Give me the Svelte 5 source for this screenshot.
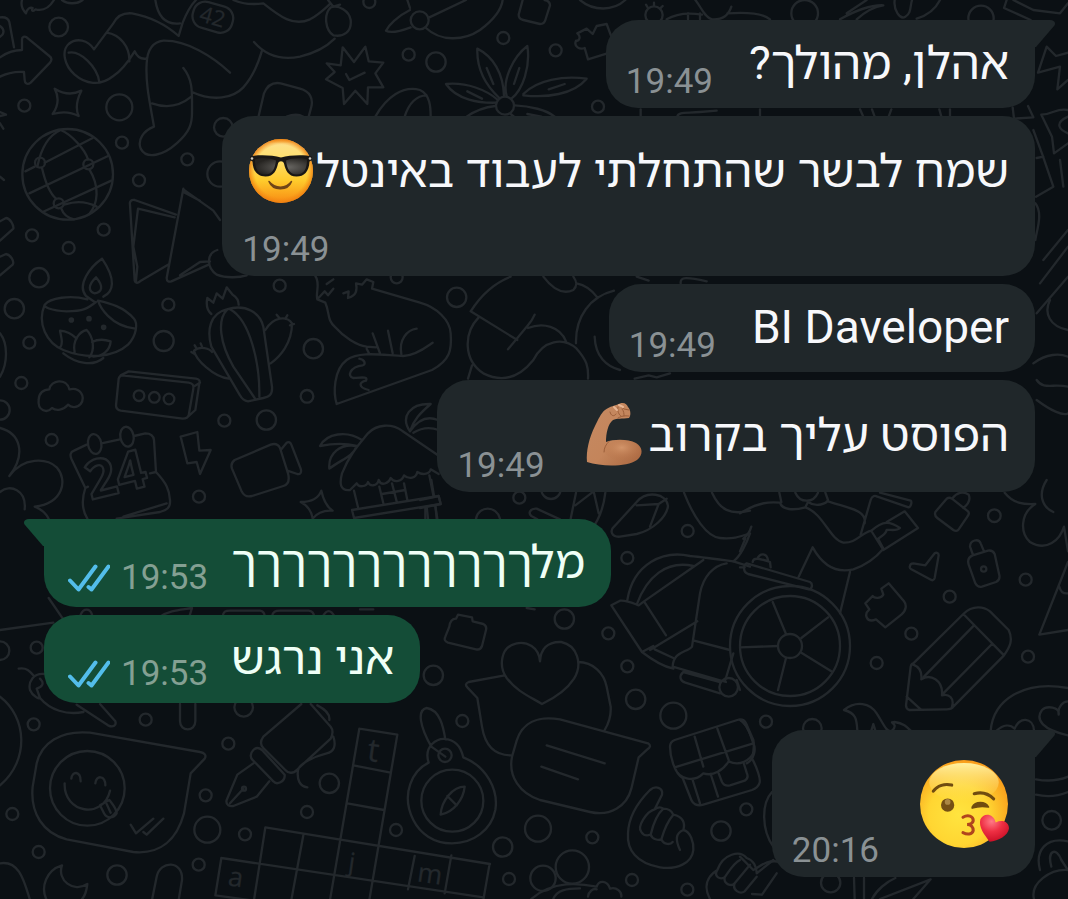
<script>
  const messages = [
    { id: 1, side: 'in', text: 'אהלן, מהולך?', time: '19:49', tail: true },
    { id: 2, side: 'in', text: 'שמח לבשר שהתחלתי לעבוד באינטל', emoji: 'cool', time: '19:49', stacked: true },
    { id: 3, side: 'in', text: 'BI Daveloper', time: '19:49' },
    { id: 4, side: 'in', text: 'הפוסט עליך בקרוב', emoji: 'arm', time: '19:49' },
    { id: 5, side: 'out', text: 'מל' + 'ך'.repeat(12), time: '19:53', tail: true, first: true },
    { id: 6, side: 'out', text: 'אני נרגש', time: '19:53' },
    { id: 7, side: 'in', emoji: 'kiss', time: '20:16', tail: true, first: true }
  ];

  // Wallpaper dots: x, y, radius
  const dots = [
    [176,81,28],[73,317,18],[358,322,39],[366,428,18],[562,478,18],[417,541,18],[311,689,18],[96,706,18],[206,744,18],[117,833,29],[670,382,28],[660,522,38],[839,857,18],[120,488,15],[265,493,15],[176,610,15],
    [1108,6,18],[1226,164,18],[1308,186,29],[1510,114,18],[1667,151,18],[1794,320,18],[1259,61,27],[1515,317,27],[1962,45,26],
    [43,926,29],[88,1028,18],[64,1149,18],[505,914,18],[491,1023,30],[940,1046,29],[921,1189,19],[799,1260,29],[673,1262,18],[155,1320,18],[597,1490,18],[1190,832,18],[417,1187,16],[463,1192,16],[507,1197,16],[0,1230,29],
    [1558,1493,18],[1653,1468,29],[2063,1593,18],[1882,1674,18],[1825,1900,18],[1693,1857,29],[1882,1999,18],[1907,2098,29],[2020,2147,39],[1300,2026,29],[1387,2163,18],[1614,2486,39],[1508,2541,29],[1777,2512,18],[2163,2493,29],[2239,2428,18],[1527,2637,18],[1629,2635,38],[1717,2601,50],[1896,2640,18],[2062,2669,18],[1357,2402,93],[1335,2266,20],
    [2983,1547,19],[3077,1739,18],[2849,1790,18],[2734,1901,18],[2630,1989,18],[3084,1970,18],[2298,2165,18],[2437,2185,28],[2951,1707,8],[2370,1938,180],[2370,1938,150],[2370,1938,36],
    [101,2173,18],[437,2159,18],[110,1943,18],[0,1952,28],[37,2442,18],[617,2386,18],[685,2231,18],[988,2350,29],[921,2436,18],[622,2489,39],[735,2503,18],[596,2594,18],[116,2556,18],[351,2625,29],[1188,2490,18],[731,2122,28],[262,2365,112],
    [2414,40,40],[2943,55,38],[3155,2461,28],[2492,2648,29],[1370,892,29]
  ];
</script>

{#snippet emojiIcon(kind)}
  {#if kind === 'cool'}
    <svg class="emoji" viewBox="0 0 66 66" role="img" aria-label="😎">
      <defs>
        <linearGradient id="coolFace" x1="0" y1="0" x2="0" y2="1">
          <stop offset="0" stop-color="#f6a62c" /><stop offset=".07" stop-color="#fde08a" /><stop offset=".3" stop-color="#ffe06e" /><stop offset=".65" stop-color="#ffcb2c" /><stop offset="1" stop-color="#f88a12" />
        </linearGradient>
        <radialGradient id="coolEdge"><stop offset=".82" stop-color="#f58d16" stop-opacity="0" /><stop offset="1" stop-color="#ee7d10" stop-opacity=".85" /></radialGradient>
        <radialGradient id="lens" cx=".6" cy=".55" r=".6"><stop offset="0" stop-color="#6c6a66" /><stop offset="1" stop-color="#262421" /></radialGradient>
      </defs>
      <circle cx="33" cy="33" r="32" fill="url(#coolFace)" />
      <circle cx="33" cy="33" r="32" fill="url(#coolEdge)" />
      <path d="M2 18.500C10 16.500 24 17 33 19.500 42 17 56 16.500 64 18.500L64 22 61.500 23.500C61 34 56 38.500 48.500 38.500 40 38.500 37.500 32 36 25.500 35 22.500 31 22.500 30 25.500 28.500 32 26 38.500 17.500 38.500 10 38.500 5 34 4.500 23.500L2 22Z" fill="#191715" />
      <path d="M7 21.500C13 19.500 22 20 28 22.500 27 31 24 36.500 17.500 36.500 10 36.500 7 31 7 21.500ZM59 21.500C53 19.500 44 20 38 22.500 39 31 42 36.500 48.500 36.500 56 36.500 59 31 59 21.500Z" fill="url(#lens)" />
      <circle cx="4" cy="20.500" r="1.300" fill="#cfcac2" /><circle cx="62" cy="20.500" r="1.300" fill="#cfcac2" />
      <path d="M21 43.500C27 51 38 51 43.500 43.500 40 53 25 53.500 21 43.500Z" fill="#704517" stroke="#704517" stroke-width="1.500" stroke-linejoin="round" />
    </svg>
  {:else if kind === 'arm'}
    <svg class="emoji" viewBox="-3 0 66 66" role="img" aria-label="💪🏽">
      <defs>
        <linearGradient id="arm" x1="0" y1="0" x2="1" y2="1"><stop offset="0" stop-color="#c58a63" /><stop offset=".55" stop-color="#c4855b" /><stop offset="1" stop-color="#a9663f" /></linearGradient>
        <radialGradient id="bicep" cx=".5" cy=".35" r=".65"><stop offset="0" stop-color="#d3956a" /><stop offset="1" stop-color="#b57045" stop-opacity="0" /></radialGradient>
      </defs>
      <path d="M3 60C2 49 5 36 11 24 14 18 17 11 21 8 26 4 31 4 36 1.500 40 0 43 2 44 5 47 8 47 14 45 16 38 17 33 16 29 18 24 22 22 31 22 40 30 37 44 37 52 41 59 45 59.500 53 53 58 43 65 18 65 3 60Z" fill="url(#arm)" />
      <path d="M23 43C30 37 44 37 51 41 57 45 57 52 51 56 42 62 25 60 20 49Z" fill="url(#bicep)" />
      <path d="M20 50C20 46 22 42 25 39.500M26 10C27 14 30 15 32 12M34 5C33 9 35 13 37 14M38 7C40 9 40 12 40 14M36 4 40 7 45 8M34 16C39 13 43 14 45 14" fill="none" stroke="#9b5e39" stroke-width="1" stroke-linecap="round" />
      <path d="M35 3 39 5M30 5 33 8" stroke="#e8b795" stroke-width="2" stroke-linecap="round" />
    </svg>
  {:else}
    <svg class="emoji large" viewBox="0 0 88 88" role="img" aria-label="😘">
      <defs>
        <radialGradient id="kissFace" cx=".44" cy=".62" r=".62"><stop offset="0" stop-color="#ffe43f" /><stop offset=".55" stop-color="#ffd632" /><stop offset="1" stop-color="#f99d1b" /></radialGradient>
        <linearGradient id="kissShine" x1="0" y1="0" x2="0" y2="1"><stop offset="0" stop-color="#fff1a0" /><stop offset="1" stop-color="#ffdf60" stop-opacity="0" /></linearGradient>
        <radialGradient id="heart" cx=".4" cy=".25" r=".75"><stop offset="0" stop-color="#ff7a86" /><stop offset=".5" stop-color="#ee2f43" /><stop offset="1" stop-color="#cb1027" /></radialGradient>
      </defs>
      <circle cx="44" cy="44" r="43" fill="url(#kissFace)" />
      <ellipse cx="44" cy="23" rx="34" ry="19" fill="url(#kissShine)" />
      <path d="M14 31.500C18 26 25 24 32 25.500M54 34C61 32 68 34 73 39" fill="none" stroke="#704c10" stroke-width="3" stroke-linecap="round" />
      <circle cx="28" cy="45" r="6.500" fill="#755014" /><circle cx="28" cy="42" r="2.800" fill="#ab8745" />
      <path d="M52 47C55 41 65 41 68 47 63 46 58 46 52 48Z" fill="#704c10" stroke="#704c10" stroke-width="1.500" stroke-linejoin="round" />
      <path d="M43 57C48 54 53 56 53 60 53 63 49 64 47 64 51 64 53 67 53 70 52 74 47 74 43 72" fill="none" stroke="#b0451d" stroke-width="3" stroke-linecap="round" />
      <path d="M69 81C64 74 58 67 60 59 63 52 73 53 75 62 81 59 88 61 88 68 87 75 78 80 69 81Z" fill="url(#heart)" />
    </svg>
  {/if}
{/snippet}

<div class="chat">
  <svg class="wallpaper" viewBox="0 0 3204 2697" preserveAspectRatio="xMidYMin slice" aria-hidden="true">
    {#each dots as [cx, cy, r]}
      <circle {cx} {cy} {r} />
    {/each}

    <!-- upper left: stocking figure, arrow, globe, cards -->
    <path d="M66 0C62 15 66 28 78 40 80 28 90 20 98 24 92 32 100 36 106 28 135 35 150 20 162 0M186 0C200 12 230 14 248 0M0 52C18 50 26 58 28 66L42 142M0 172C20 158 44 150 66 150L66 118C66 110 74 108 80 112L148 168C156 174 156 180 150 188L92 248C82 256 74 250 74 240L72 216C44 214 20 220 0 230M0 78C14 88 14 102 0 110" />
    <path d="M282 148 340 70C352 46 372 38 396 40 450 50 500 76 536 108L548 68C560 38 572 16 588 0M466 0C472 40 490 76 540 70M282 148C264 120 230 112 206 132 184 152 192 196 224 224 256 252 300 260 340 228 370 208 388 180 404 154 410 168 422 178 438 176M206 158C240 150 292 200 298 246M320 98C360 104 390 140 388 184M690 218C640 170 560 120 490 122 456 126 442 150 440 190 436 250 450 310 462 380 430 392 412 420 422 446 440 480 490 466 530 430 570 396 576 370 576 340 576 280 580 240 550 204M576 276C640 306 700 294 730 262 754 236 772 200 786 152M762 126C800 170 850 180 900 170 950 158 980 140 1004 116M456 310C500 326 540 318 574 290M700 0C730 14 760 14 790 10 840 50 880 80 930 58 955 45 975 25 990 12M992 22C970 44 976 90 1000 106 1030 112 1056 96 1052 60 1048 32 1016 14 992 22ZM984 0 1000 20 1020 14" />
    <rect x="578" y="12" width="122" height="80" rx="36" transform="rotate(16 640 50)" />
    <text class="bold" x="600" y="74" font-size="66" transform="rotate(16 640 50)">42</text>
    <path d="M164 266C190 282 220 284 244 272 230 300 226 326 236 348 210 334 186 334 158 342 176 316 178 292 164 266ZM0 336 18 344 0 348M0 370 10 386M0 530 12 540M776 348 792 280C802 256 820 246 842 250L900 266C930 274 940 296 934 320L926 350M860 350C880 342 896 342 910 350" />
    <circle cx="203" cy="523" r="136" />
    <path d="M112 500C124 440 150 404 182 390C216 404 256 450 264 478M134 488 278 414M76 514 104 500M88 580 324 468M128 636 334 542M126 504C136 548 150 580 168 596M192 614C220 606 250 600 290 620M184 626C190 644 204 654 222 658M268 508C300 560 294 610 268 642" />
    <path d="M528 644 404 600C394 598 388 604 390 614L404 842C406 850 414 850 420 844L504 794M524 652 414 626 400 740 412 800 408 842M550 566 500 834C500 844 506 846 514 844L626 794M550 568 640 632 660 660M550 576 600 602M540 826 600 786 630 784M652 750C620 760 618 800 650 824 680 836 720 832 740 826" />
    <path d="M0 664 18 654C30 654 42 676 40 686L0 722M0 770 18 762C32 764 44 784 38 794L0 826" />

    <!-- burst, flower, planet -->
    <path d="M980 190 1022 196 1028 142 1062 186 1096 140 1106 184 1150 188 1126 220 1150 262 1104 262 1102 312 1066 272 1032 312 1028 264 978 238 1004 216ZM1038 222 1048 240 1094 218" />
    <path d="M1230 24 1222 0M1230 30C1190 50 1166 76 1158 92 1170 100 1200 94 1232 82M1288 52 1398 0M1278 84C1320 124 1390 124 1440 90 1480 60 1504 30 1508 0M1568 0 1556 44C1556 54 1562 58 1570 60L1620 72C1630 72 1634 68 1636 60L1650 16C1650 8 1644 2 1634 0M1740 0C1780 34 1840 34 1876 0" />
    <path d="M1498 294C1450 250 1430 200 1432 146 1480 170 1510 220 1512 288M1520 288C1506 240 1540 170 1582 138 1592 200 1568 270 1534 296M1490 308C1440 310 1370 300 1338 252 1400 246 1460 270 1494 300M1570 282C1610 240 1690 226 1760 236 1720 284 1640 294 1570 286M1486 318C1450 322 1420 336 1400 350M1544 316C1590 318 1640 330 1664 350M1532 342 1542 350M1460 204 1480 252M1558 204 1542 252M1402 274 1446 296M1646 268 1694 252M1582 342 1624 350M1126 350C1160 290 1210 256 1260 270 1290 284 1292 320 1292 350M1214 350C1226 310 1250 286 1280 286" />
    <path d="M1732 100 1760 86 1778 102 1790 78 1820 72 1834 110M1732 100C1744 110 1738 124 1728 122 1720 140 1740 150 1754 144L1764 178 1822 160M1944 24 1938 14M1962 18 1962 8M1980 26 1988 18M2000 58C2030 40 2070 38 2106 44M2064 40V58M2100 40V58M2086 0C2104 22 2112 50 2136 58 2170 60 2186 46 2194 20M2182 40C2240 36 2290 40 2310 58M2520 58C2570 30 2610 14 2650 16 2620 20 2590 40 2570 58M2540 40 2600 0M2684 0C2680 30 2700 60 2716 50 2734 40 2730 20 2736 0M2750 56C2790 44 2810 20 2820 0M3020 0 3012 24 3092 60M3040 0 3100 30 3180 40 3204 10" />
    <path d="M1922 328V350M2032 350C2034 334 2060 340 2100 336L2150 332M2280 328V350M2580 328 2590 350M2616 328 2624 350M2674 328 2666 350M2818 328 2824 350M2850 328V350M3038 322 3042 356 3100 352 3084 318M3114 218 3140 140 3168 168 3204 158M3114 218 3180 200 3172 268 3204 240M3124 344C3170 340 3164 324 3204 330M3124 344 3156 410 3162 460 3204 430M3100 390 3128 466 3160 560 3108 590M3130 470 3110 474M3204 350C3160 370 3180 390 3204 400M3190 560 3180 480" />
    <path d="M3106 610C3130 640 3110 690 3106 720M3204 690 3130 780M3204 740 3120 850M3110 940 3204 830M3204 990C3150 980 3130 940 3150 900M3100 1090C3140 1060 3180 1060 3204 1070M3110 1200C3150 1230 3190 1250 3204 1240M3204 1160C3160 1150 3130 1170 3110 1140" />

    <g transform="translate(0 810)">
      <!-- lamp, cloud, router -->
      <path d="M306-34C350 30 340 66 310 80M306-34C270-10 230 46 258 78L284 96M288 22C262 46 266 66 284 70 306 66 312 50 288 22ZM288 96C262 116 250 124 200 124 150 122 130 110 134 104 150 84 210 74 262 88M134 104C110 160 140 220 190 240 260 268 340 264 384 224 410 196 414 160 402 146 370 110 330 100 294 92M294 92C300 110 330 168 406 176M190 250C230 282 280 290 310 264M180 234C190 220 184 204 180 182 204 184 220 196 230 206M224 248C216 210 240 184 260 180 280 200 286 240 268 262M276 216C300 204 320 210 332 214 330 240 310 258 280 260" />
      <circle class="solid" cx="214" cy="150" r="5" /><circle class="solid" cx="267" cy="146" r="5" /><circle class="solid" cx="311" cy="172" r="5" />
      <path d="M148 358C152 330 200 322 208 358 240 350 258 380 242 402 230 416 212 412 204 404 190 420 170 424 156 414 140 432 112 420 116 390 116 370 130 358 148 358ZM366 316 566 338C578 340 582 346 580 356L566 436C564 444 558 446 548 446L362 422C352 420 348 414 348 406L356 326C358 320 360 316 366 316ZM362 316 386 304 588 326C600 328 600 334 598 340L586 420 564 440M580 350 600 338" />
      <!-- cactus -->
      <path d="M634 132C622 122 618 104 622 84L640 98 650 70 668 86 680 52 698 74C714 84 716 94 716 104M744 394C730 392 724 384 720 376L634 230C620 180 630 130 680 118 740 100 780 130 790 170L816 350C818 376 806 380 790 384ZM682 118C650 150 660 220 700 290L764 384M690 118C750 150 780 280 778 380M796 180C820 140 860 136 876 160 876 220 840 260 812 280M686 326C640 320 588 270 582 242 600 226 630 236 636 246M574 246 584 252M584 226 590 236M602 220 606 230M830 134 838 144M862 136 856 146M882 162 870 166" />
      <!-- fox -->
      <path d="M946 18C962 40 946 70 952 88L976 98C990 130 980 150 1006 172 1030 200 1070 226 1100 230L1128 232M952 88 974 64 984 76 1000 56M980 42 1000 28M1030 70 1046 64 1044 84C1070 76 1072 60 1068 40L1086 44 1100 28 1120 36 1116 56M1116 56 1260 98C1310 112 1350 150 1352 190 1356 240 1350 270 1296 300L1010 402C1000 370 1000 300 1040 270 1080 242 1150 256 1210 258 1250 256 1280 230 1298 218M1078 266C1096 270 1098 284 1088 286 1050 290 1040 320 1060 324 1090 322 1104 320 1098 332 1080 336 1070 350 1106 360M1118 190 1140 250M1164 182 1178 250M1204 252C1196 210 1220 180 1250 176M1100 236 1108 252" />
      <!-- calendar, bolt, camera, beach hut -->
      <path d="M260 524 222 542C210 546 210 556 214 566L256 654 264 650M450 610 468 606 462 510C460 494 450 490 436 490L402 498M304 520 360 508M256 654C244 690 246 720 262 746M468 606C500 640 508 660 510 690 512 714 500 720 480 726L350 746M500 700 370 740" />
      <ellipse cx="284" cy="522" rx="20" ry="30" transform="rotate(-10 284 522)" /><ellipse cx="381" cy="500" rx="20" ry="30" transform="rotate(-10 381 500)" />
      <text class="outline" x="272" y="690" font-size="160" transform="rotate(-14 272 690)">24</text>
      <path d="M542 500 592 486 598 542 632 540 600 612 590 576 562 580ZM704 570 812 524C830 518 836 526 840 534L864 610C870 634 864 644 850 648L756 678C734 684 728 670 724 662L696 596C692 584 696 576 704 570ZM842 540 860 518C866 514 872 518 874 524L902 596C906 608 900 614 892 612L862 602" />
      <path d="M1050 660C1020 664 1018 640 1026 610 1050 550 1080 520 1104 490 1130 462 1176 460 1206 482L1314 556M1050 660 1070 640C1076 654 1100 650 1104 636 1108 650 1132 650 1136 630 1144 650 1166 640 1172 624 1184 640 1206 634 1212 616 1228 630 1248 624 1252 606 1270 618 1290 610 1292 598L1316 612M1062 662 1074 712M1138 650 1150 700M1212 640 1222 690M1288 616 1300 676M1056 720 1316 678 1322 702 1062 744ZM1176 640 1190 694M1146 672 1216 660M1086 510C1040 480 980 490 960 528 1000 520 1040 520 1070 528M1070 528C1020 520 984 550 988 596 1020 570 1060 560 1070 528M1230 484C1200 440 1230 400 1292 402 1260 430 1240 450 1230 484 1260 440 1290 440 1314 450M1240 488C1270 470 1300 474 1316 480M1280 710 1284 746M1306 706 1310 746M902 696C926 696 954 690 964 662 970 690 980 710 998 722 970 720 950 730 938 746 934 720 922 706 902 696Z" />
      <path d="M0 474C60 490 80 550 28 618 70 560 140 564 170 592 204 630 190 700 104 710 130 720 140 734 146 746M0 666C30 640 80 660 74 718M0 190C24 220 24 280 0 320" />
    </g>

    <g transform="translate(1290 810)">
      <path d="M340 20C370 60 400 74 430 60 444 46 440 34 430 20M242 20C190 40 150 80 122 124L262 210M146 142C100 190 100 270 160 310 220 340 270 320 310 270 340 210 400 200 440 236 470 270 476 290 474 326M126 286 114 326M234 238 292 168C304 154 310 144 314 134M294 174C340 156 390 170 408 214M440 40C470 46 490 66 502 82M552 62C480 80 436 140 438 220M494 200C496 260 530 290 570 300M620 20 656 32M752 40C750 20 770 20 830 34M614 326 656 316 680 322 720 310" />
    </g>

    <g transform="translate(1260 1440)">
      <path d="M34 0 42 48M0 60 56 48 62 72 0 84M16 84V116M46 78 52 116M168 116C176 76 230 76 240 116M420 118 350 86C330 84 324 100 334 108L352 118M468 38 452 116M466 76 516 38M522 38 536 100M556 38C550 90 530 130 510 154M600 170C572 172 570 150 582 140L650 66C680 30 740 40 744 78 740 110 700 150 650 162ZM650 76 716 72 690 140M716 72 740 56M792 38C820 110 860 170 900 174 940 178 960 170 990 160M876 38C900 90 930 106 990 92M990 160C980 190 960 230 940 244" />
      <path d="M622 360C640 250 730 210 810 228 850 232 880 236 940 244L990 260M650 374C680 290 740 240 820 258M672 364 850 240M574 376 666 516 700 498M574 376 600 362C620 360 640 370 656 376L672 364 738 466M690 510 832 424M666 516C710 550 740 562 760 566M816 500C800 518 760 514 758 560L918 606M816 500 840 340C850 290 880 256 920 250M822 482 930 510M790 576C776 588 780 604 796 608L900 640M790 576 900 606M704 508 760 534M940 520 916 600" />
      <circle cx="926" cy="622" r="28" /><path d="M950 600 960 630" />
      <!-- folder, heart bubble, text bubble -->
      <path d="M88 440C90 424 96 416 108 416L114 404 156 412 158 424 190 432C198 436 200 442 198 450L186 498C182 508 176 510 168 508L84 488C74 484 72 478 76 470ZM526 278 540 276M320 384 344 388" />
      <path d="M360 544C356 500 320 484 290 490 240 500 236 560 260 594 290 634 330 650 366 672 400 656 440 630 462 596 490 550 470 496 424 486 380 484 362 510 360 544ZM474 546C520 546 552 580 560 620L572 680C574 710 566 730 554 750M254 586 146 606C136 610 136 616 142 622L172 654 186 740C194 790 220 826 272 826M420 718 684 790C694 796 690 804 682 808L656 832 634 926C620 980 570 1010 510 996L360 960C300 940 264 890 276 830L290 782C306 730 350 706 420 718ZM380 796 554 850M364 860 474 898" />
      <!-- compass -->
      <path d="M26 848C10 800 50 770 84 778 116 786 124 810 130 832 200 860 236 930 226 990 214 1050 160 1090 96 1090 40 1090 0 1060-20 1020-60 940-20 870 26 848ZM34 800C0 740-10 690 20 684 60 690 70 740 76 778M34 800 76 830M134 920C100 920 64 960 62 1004 100 996 130 960 134 920ZM82 948 110 976" />
      <!-- chest, hands -->
      <path d="M764 780 952 720C966 716 974 722 978 730L1000 780C1004 800 1000 820 996 836 1010 860 1024 900 1018 910 1014 922 1006 926 996 930L850 974C830 980 818 970 814 960L788 894C764 880 750 830 750 800 750 790 754 784 764 780ZM764 862 1000 790M824 770 850 860M892 746 926 840M764 862C776 896 820 910 850 880 880 890 910 870 926 844 960 860 990 840 1000 820M818 900 840 970M872 882 894 950M896 880 906 906C912 918 920 918 930 916L974 902C984 896 984 886 980 878L972 852" />
      <path d="M704 988C680 994 650 1040 664 1056 672 1070 686 1066 692 1064 700 1030 714 1000 730 986 722 980 712 982 704 988M692 1064C696 1078 716 1082 724 1078 732 1050 746 1020 760 1004 754 990 742 986 730 986M724 1078C732 1096 752 1094 758 1086M760 1004C790 1010 796 1030 790 1050M790 1050C766 1060 766 1080 780 1110M790 1050C812 1054 822 1090 820 1110 816 1150 770 1170 720 1162 650 1150 620 1110 624 1060 626 1000 670 950 690 930 706 916 730 922 726 944L704 988" />
      <path d="M892 1170C880 1190 900 1200 914 1192 930 1170 940 1150 960 1140M914 1192C910 1214 936 1220 944 1210L990 1154M944 1210C936 1230 960 1244 974 1234L1010 1190M892 1170C910 1120 960 1110 980 1134 1000 1140 1010 1160 1010 1180L1060 1140M870 1257C850 1220 860 1190 892 1170M334 1257C400 1200 480 1210 530 1220 536 1200 562 1200 570 1226 590 1220 606 1236 604 1250M504 1250C506 1234 520 1224 530 1228M400 1257C410 1230 440 1225 480 1225" />
    </g>

    <g transform="translate(2220 1440)">
      <path d="M0 100C60 64 90 66 120 68 126 90 160 92 196 82 250 100 270 180 310 188 350 190 360 160 394 152 430 120 450 124 480 144 470 154 450 148 440 150 438 160 424 170 414 176L430 206M118 38 124 66M166 38C180 70 220 70 234 38M196 82 204 66C230 84 260 70 264 60L256 38M264 64C330 86 380 90 374 130M396 156 430 210 534 144 494 94 440 126M362 164 392 60C396 46 406 46 412 50L506 82C514 80 516 64 512 62L420 38M176 290 218 202C250 260 290 280 340 268 380 254 410 230 430 206M330 276 300 400M10 176C20 168 30 154 34 140M0 214 16 176M0 262 14 262M20 250 210 306C220 312 216 328 206 328L24 282C8 276 10 256 20 250ZM38 246C40 230 60 236 90 246L92 262M52 236C60 218 80 218 84 240M98 366 138 462M264 412 184 474M0 502 114 498M274 574 184 518M114 630 138 534" />
      <!-- tag, cursor, lock, puzzle, pencil -->
      <path d="M586 96 620 56C626 52 630 52 636 56L684 94C690 100 686 104 682 110L656 148C652 154 646 154 640 150L592 114C584 108 584 102 586 96ZM636 56C650 38 670 32 686 44 694 62 680 76 670 84M510 258C510 252 514 250 520 250L556 256 584 220C590 216 596 220 596 226L584 294C582 302 576 302 570 298L514 268C508 264 508 262 510 258ZM698 226 744 212C754 210 760 214 764 222L778 286C780 296 776 302 768 306L726 320C716 322 710 318 706 310L686 254C682 240 688 230 698 226ZM698 222 690 200C690 180 716 174 722 190L732 214M446 310 424 326 430 344C420 360 400 352 398 348L376 370 388 388C370 404 380 430 408 418L436 442 484 404C500 390 500 374 492 364ZM520 550 670 402C700 372 734 382 750 394L806 450C820 480 810 500 792 526L640 680C636 686 630 688 620 688L508 690C500 688 498 684 498 676L512 560C514 552 518 550 520 550ZM670 402 792 526M552 590 702 436M610 640 756 492M520 554C540 562 546 580 544 598 570 580 610 600 606 646 626 640 644 654 636 680M500 650 542 688" />
      <path d="M794 38C820 70 850 74 886 72 840 100 840 160 870 186 920 216 960 180 972 140L984 214M920 0C894 40 904 80 940 96M984 246 898 464 984 450M958 320C962 336 970 342 984 340M752 752C760 660 850 600 984 624M770 752C790 734 810 732 824 746 836 710 880 710 882 752M956 704C960 680 920 676 906 690 884 720 910 750 984 766M956 704C952 680 970 664 984 664M312 690C350 660 390 670 410 700 430 730 440 760 456 752 480 730 440 726 464 726 490 730 500 740 512 752M312 690C350 700 350 720 352 752M394 752 400 732 406 752M0 720C20 730 30 760 38 780" />
    </g>

    <g transform="translate(0 1800)">
      <path d="M146-6 190 58M0 90 160 68M242 44C250 24 270 24 276 44M480 50C510 30 540 30 576 24L568 50M668 50C670 34 676 32 690 32H780C790 34 794 40 794 50M816 50C818 34 826 32 840 32H926C938 34 942 40 942 50M968 50C980 28 992 28 1004 50M1080 28H1120" />
      <path d="M56 206C80 202 90 214 100 226M134 222C100 218 84 246 90 270 98 290 120 298 120 294L110 266C128 260 134 250 120 236M120 294C150 330 200 346 250 336M230 314 324 376C340 384 350 376 346 364L300 312M540 312V364C540 396 586 396 586 364V312M0 290C80 350 90 480 0 556" />
      <path d="M270 398 600 456C614 458 620 466 614 476L572 520 552 640C530 720 480 764 400 756L200 718C130 700 90 640 98 560L110 490C124 430 180 390 270 398ZM214 536C216 512 242 512 242 544M286 550C288 524 316 526 316 556M194 550C190 640 310 660 330 572M300 616 328 600C340 616 350 626 350 640 340 656 320 656 312 640ZM320 612 332 638M392 674 408 700 460 656M430 696 440 704 490 656" />
      <path d="M904 312 790 410C780 424 782 436 790 444L856 510C864 520 880 522 890 510L992 416C1000 400 1000 390 992 380L932 312M952 316C980 330 990 345 988 360M1000 410C1010 440 1000 456 980 460 940 470 900 490 894 510 890 540 900 560 922 562M760 450C750 460 750 474 758 480L820 544C830 556 856 546 854 524L786 450C776 442 766 444 760 450ZM760 490 712 524 680 600C676 616 690 620 700 618L770 590 808 544M690 610 730 566" /><circle cx="732" cy="566" r="6" />
      <!-- crossword -->
      <path d="M1078 386 1192 404 1108 900M1078 386 990 900M1060 496 1172 518M1042 610 1152 630M796 682 1470 792M796 682 762 900M910 706 874 900M664 774 1450 892M664 774 646 886 762 902M1244 768 1224 868M1354 766 1334 880M1468 796 1450 900" />
      <text class="bold" x="1102" y="484" font-size="96" transform="rotate(8 1120 460)">t</text>
      <text class="bold" x="1044" y="814" font-size="76" transform="rotate(8 1060 800)">j</text>
      <text class="bold" x="684" y="858" font-size="80" transform="rotate(8 700 840)">a</text>
      <text class="bold" x="1252" y="848" font-size="80" transform="rotate(8 1280 830)">m</text>
      <path d="M186 796C140 810 120 860 140 900M186 796C170 840 220 880 262 852 260 870 254 890 244 900M456 900 470 830C480 780 550 780 546 840L536 900M0 790C60 780 74 850 90 900" />
    </g>

    <g transform="translate(2220 2100)">
      <path d="M0 60C20 70 30 100 40 130 50 150 40 180 20 190M96 276C64 310 64 390 100 440M0 470 40 510C60 500 80 476 122 486M66 584 110 520M36 582 66 584M888 238C930 246 960 240 984 230M888 284C930 294 960 286 984 276M342 534 344 597M372 534V597M396 597C410 570 440 545 466 534M420 597 572 538 520 597M900 510C884 450 920 410 984 424M934 500C920 450 950 440 964 480L984 510M984 510C930 506 870 550 882 597" />
    </g>
  </svg>

  <main class="messages">
    {#each messages as m (m.id)}
      <article class="bubble {m.side}" class:stacked={m.stacked} class:tailed={m.tail} class:first={m.first}>
        {#if m.tail}
          <svg class="tail" viewBox="0 0 20 28" aria-hidden="true"><path d="M0 0H15C19 0 21.500 3 19 6L1 27H0Z" /></svg>
        {/if}
        {#if m.text}
          <p class="text" class:tall={m.emoji} dir="rtl">{m.text}{#if m.emoji}{@render emojiIcon(m.emoji)}{/if}</p>
        {:else}
          <p class="sticker">{@render emojiIcon(m.emoji)}</p>
        {/if}
        <footer class="meta">
          {#if m.side === 'out'}
            <svg class="ticks" viewBox="0 0 42 28" role="img" aria-label="Read"><path d="M2 16.500 10.500 25.500 27.500 2.500M20.500 23 23.500 25.500 40.500 2.500" /></svg>
          {/if}
          <time>{m.time}</time>
        </footer>
      </article>
    {/each}
  </main>
</div>

<style>
  :global(body) {
    margin: 0;
    background: #0b1014;
  }

  .chat {
    position: relative;
    min-height: 100vh;
    overflow: hidden;
    background: #0b1014;
    font-family: Roboto, 'Noto Sans Hebrew', 'Open Sans', 'Noto Sans', sans-serif;
  }

  .wallpaper {
    position: absolute;
    inset: 0;
    width: 100%;
    height: 100%;
    fill: none;
    stroke: #23282c;
    stroke-width: 7;
    stroke-linecap: round;
    stroke-linejoin: round;
  }

  .wallpaper .solid {
    fill: #23282c;
  }

  .wallpaper text {
    font-family: 'Open Sans', sans-serif;
  }

  .wallpaper .bold {
    fill: #23282c;
    stroke-width: 1;
  }

  .wallpaper .outline {
    font-weight: 700;
  }

  .messages {
    position: relative;
    display: flex;
    flex-direction: column;
    gap: 8px;
    padding: 20px 33px 20px 44px;
  }

  .bubble {
    position: relative;
    display: flex;
    flex-direction: row-reverse;
    align-items: flex-end;
    border-radius: 32px;
  }

  .in {
    align-self: flex-end;
    gap: 36px;
    padding: 13px 26px 6px 20px;
    background: #20272a;
    color: #f7f8fb;
  }

  .out {
    align-self: flex-start;
    gap: 23px;
    padding: 13px 26px 9px 24px;
    background: #144d37;
    color: #effff6;
  }

  .first {
    margin-top: 19px;
  }

  .in.tailed {
    border-top-right-radius: 0;
  }

  .out.tailed {
    border-top-left-radius: 0;
  }

  .stacked {
    flex-direction: column;
    align-items: stretch;
    gap: 8px;
  }

  .stacked .text {
    padding-left: 6px;
  }

  .tail {
    position: absolute;
    top: 0;
    width: 20px;
    height: 28px;
  }

  .in .tail {
    left: 100%;
    fill: #20272a;
  }

  .out .tail {
    right: 100%;
    fill: #144d37;
    transform: scaleX(-1);
  }

  .text {
    margin: 0 0 9px;
    font-size: 46px;
    line-height: 60px;
  }

  .out .text {
    margin-bottom: 6px;
  }

  .text.tall {
    line-height: 84px;
  }

  .emoji {
    width: 66px;
    height: 66px;
    vertical-align: -17px;
  }

  .text .emoji {
    margin-right: 2px;
  }

  .sticker {
    display: flex;
    margin: 16px 0 22px 4px;
  }

  .large {
    width: 90px;
    height: 90px;
  }

  .meta {
    display: flex;
    align-items: center;
    gap: 11px;
    color: #8a9194;
    font-size: 35px;
    line-height: 40px;
  }

  .out .meta {
    color: #84a093;
  }

  .ticks {
    width: 42px;
    height: 28px;
    fill: none;
    stroke: #53bdea;
    stroke-width: 4;
    stroke-linecap: round;
    stroke-linejoin: round;
  }
</style>
